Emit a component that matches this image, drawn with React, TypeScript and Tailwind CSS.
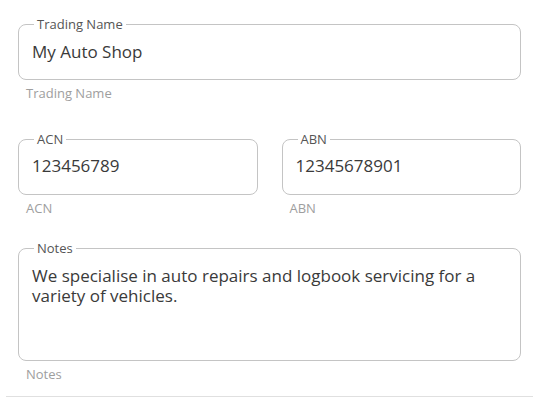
import type { ReactNode } from "react"

type FieldProps = {
  label: string
  height: string
  children: ReactNode
}

function Field({ label, height, children }: FieldProps) {
  return (
    <div>
      <fieldset
        className={`${height} rounded-[8px] border border-[#c4c4c4] px-[13px]`}
      >
        <legend className="ml-[2px] px-[3px] text-[13px] leading-4 text-[#555555]">
          {label}
        </legend>
        {children}
      </fieldset>
      <p className="mt-[5px] ml-[8px] text-[13px] leading-4 text-[#9e9e9e]">
        {label}
      </p>
    </div>
  )
}

export default function App() {
  return (
    <div
      className="w-[535px] bg-white pt-[16px] pr-[2px] pl-[6px] text-[#3a3a3a]"
      style={{ fontFamily: '"Open Sans", "Liberation Sans", sans-serif' }}
    >
      <div className="pr-[12px] pl-[12px]">
        <Field label="Trading Name" height="h-[64px]">
          <div className="pt-[8px] text-[17px] leading-6">My Auto Shop</div>
        </Field>

        <div className="mt-[30px] grid grid-cols-2 gap-x-[24px]">
          <Field label="ACN" height="h-[64px]">
            <div className="pt-[7px] text-[17px] leading-6">123456789</div>
          </Field>
          <Field label="ABN" height="h-[64px]">
            <div className="pt-[7px] text-[17px] leading-6">12345678901</div>
          </Field>
        </div>

        <div className="mt-[24px]">
          <Field label="Notes" height="h-[121px]">
            <div className="pt-[10px] pr-[14px] text-[17px] leading-[20px]">
              We specialise in auto repairs and logbook servicing for a variety
              of vehicles.
            </div>
          </Field>
        </div>
      </div>

      <div className="mt-[14px] border-t border-[#e0e0e0]" />
    </div>
  )
}
